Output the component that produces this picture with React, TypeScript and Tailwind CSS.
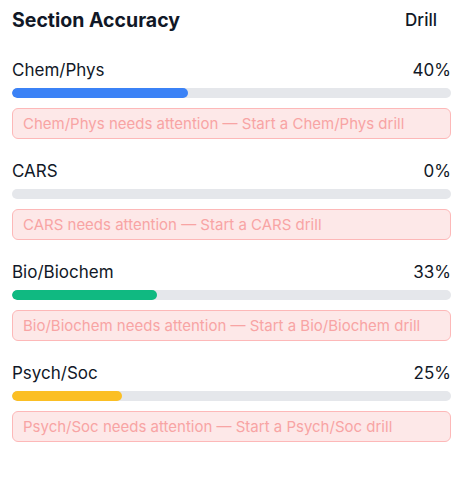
const sections = [
  { name: 'Chem/Phys', pct: 40, color: 'bg-[#3b82f6]' },
  { name: 'CARS', pct: 0, color: 'bg-[#3b82f6]' },
  { name: 'Bio/Biochem', pct: 33, color: 'bg-[#10b981]' },
  { name: 'Psych/Soc', pct: 25, color: 'bg-[#fbbf24]' },
]

export default function App() {
  return (
    <div className="min-h-screen bg-white px-3 font-['Inter','Liberation_Sans',sans-serif] text-[#111827]">
      <div className="flex h-10 items-center justify-between">
        <h2 className="text-[19.5px] leading-7 font-bold">Section Accuracy</h2>
        <button className="px-3.5 py-2 text-[17px] leading-6 font-medium">Drill</button>
      </div>

      <div className="mt-[18px] space-y-5">
        {sections.map((s) => (
          <div key={s.name}>
            <div className="flex items-center justify-between text-[17px] leading-6">
              <span>{s.name}</span>
              <span>{s.pct}%</span>
            </div>
            <div className="mt-1.5 h-2.5 w-full overflow-hidden rounded-full bg-[#e5e7eb]">
              <div className={`h-full rounded-full ${s.color}`} style={{ width: `${s.pct}%` }} />
            </div>
            <div className="mt-2.5 rounded-md border border-[#fdb8b8] bg-[#fde8e8] px-2.5 py-1 text-[15px] leading-[21px] text-[#f8a4a4]">
              {s.name} needs attention — Start a {s.name} drill
            </div>
          </div>
        ))}
      </div>
    </div>
  )
}
